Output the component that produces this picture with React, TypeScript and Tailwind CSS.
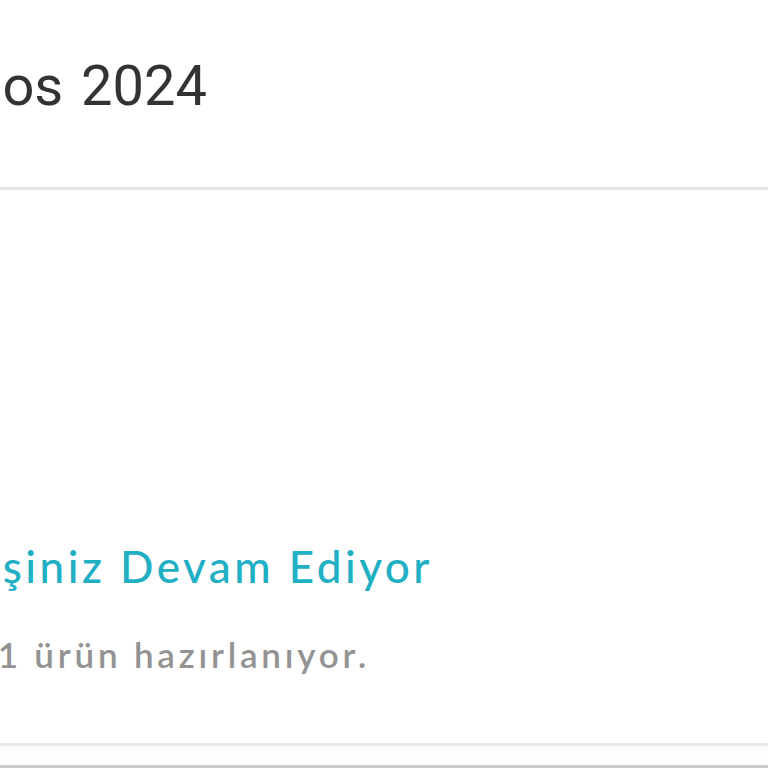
export default function App() {
  return (
    <div className="w-[768px] h-[768px] overflow-hidden bg-white flex flex-col" style={{ fontFamily: "Lato, 'Noto Sans', sans-serif" }}>
      {/* Header date */}
      <div className="h-[187px] flex items-start pt-[52px]">
        <div className="w-[207px] flex justify-end whitespace-nowrap">
          <span className="text-[56px] leading-[68px] text-[#333333] [word-spacing:4px]" style={{ fontFamily: "Roboto, sans-serif" }}>
            os 2024
          </span>
        </div>
      </div>
      <div className="h-[3px] bg-[#e6e6e6]" />

      {/* Order status card */}
      <div className="h-[553px] flex flex-col justify-end pb-[69px]">
        <div className="w-[433px] flex justify-end whitespace-nowrap">
          <span className="text-[44px] leading-[52px] tracking-[3.5px] text-[#21afc4] font-medium">şiniz Devam Ediyor</span>
        </div>
        <div className="w-[370px] flex justify-end whitespace-nowrap mt-[42px]">
          <span className="text-[35px] leading-[40px] tracking-[3.8px] text-[#939393] font-semibold">1 ürün hazırlanıyor.</span>
        </div>
      </div>
      <div className="h-[3px] bg-[#e8e8e8]" />
      <div className="h-[19px] bg-[#fdfdfd]" />
      <div className="h-[3px] bg-[#cccccc]" />
    </div>
  );
}
